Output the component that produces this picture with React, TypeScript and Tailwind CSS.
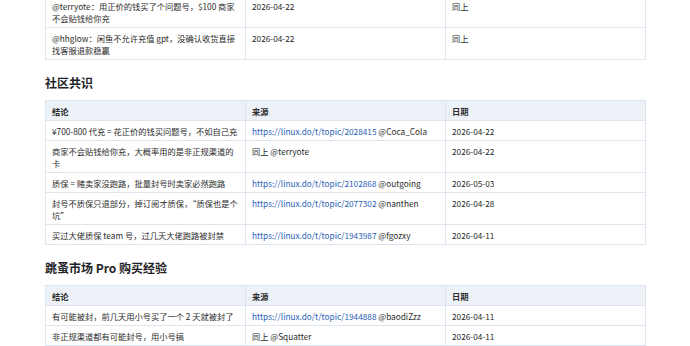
const FONT = "font-['Noto_Sans_CJK_SC','Noto_Sans',sans-serif]";

type Cell = { text: string; href?: string; after?: string };
type Row = [Cell, Cell, Cell];

const TOP_ROWS: Row[] = [
  [
    { text: "@terryote：用正价的钱买了个问题号，$100 商家不会贴钱给你充" },
    { text: "2026-04-22" },
    { text: "同上" },
  ],
  [
    { text: "@hhglow：闲鱼不允许充值 gpt，没确认收货直接找客服退款稳赢" },
    { text: "2026-04-22" },
    { text: "同上" },
  ],
];

const CONSENSUS: Row[] = [
  [
    { text: "¥700-800 代充 = 花正价的钱买问题号，不如自己充" },
    { text: "https://linux.do/t/topic/2028415", href: "#", after: " @Coca_Cola" },
    { text: "2026-04-22" },
  ],
  [
    { text: "商家不会贴钱给你充，大概率用的是非正规渠道的卡" },
    { text: "同上 @terryote" },
    { text: "2026-04-22" },
  ],
  [
    { text: "质保 = 赌卖家没跑路，批量封号时卖家必然跑路" },
    { text: "https://linux.do/t/topic/2102868", href: "#", after: " @outgoing" },
    { text: "2026-05-03" },
  ],
  [
    { text: "封号不质保只退部分，掉订阅才质保，\u201c质保也是个坑\u201d" },
    { text: "https://linux.do/t/topic/2077302", href: "#", after: " @nanthen" },
    { text: "2026-04-28" },
  ],
  [
    { text: "买过大佬质保 team 号，过几天大佬跑路被封禁" },
    { text: "https://linux.do/t/topic/1943987", href: "#", after: " @fgozxy" },
    { text: "2026-04-11" },
  ],
];

const FLEA: Row[] = [
  [
    { text: "有可能被封，前几天用小号买了一个 2 天就被封了" },
    { text: "https://linux.do/t/topic/1944888", href: "#", after: " @baodiZzz" },
    { text: "2026-04-11" },
  ],
  [
    { text: "非正规渠道都有可能封号，用小号搞" },
    { text: "同上 @Squatter" },
    { text: "2026-04-11" },
  ],
  [{ text: "" }, { text: "" }, { text: "" }],
];

function CellBody({ cell }: { cell: Cell }) {
  if (cell.href) {
    return (
      <>
        <a href={cell.href} className="text-[#2a62b8]">
          {cell.text}
        </a>
        {cell.after}
      </>
    );
  }
  return <>{cell.text || "\u00a0"}</>;
}

function Table({ rows, header }: { rows: Row[]; header?: string[] }) {
  return (
    <table className="w-[600px] table-fixed border-collapse text-[8.25px] leading-[12px] text-[#2b2b2b]">
      <colgroup>
        <col className="w-[200px]" />
        <col className="w-[200px]" />
        <col className="w-[200px]" />
      </colgroup>
      {header && (
        <thead>
          <tr className="bg-[#edf1f8]">
            {header.map((h) => (
              <th
                key={h}
                className="border border-[#dfe5ee] px-[6px] pt-[4px] pb-[3px] text-left font-bold"
              >
                {h}
              </th>
            ))}
          </tr>
        </thead>
      )}
      <tbody>
        {rows.map((row, i) => (
          <tr key={i}>
            {row.map((cell, j) => (
              <td
                key={j}
                className="border border-[#dfe5ee] pl-[6px] pr-[5px] pt-[4px] pb-[3px] align-top"
              >
                <CellBody cell={cell} />
              </td>
            ))}
          </tr>
        ))}
      </tbody>
    </table>
  );
}

function Heading({ children }: { children: React.ReactNode }) {
  return (
    <h2 className="mt-[15px] mb-[9px] text-[12px] leading-[16px] font-bold text-[#1f2328]">
      {children}
    </h2>
  );
}

export default function App() {
  const header = ["结论", "来源", "日期"];
  return (
    <div className={`${FONT} h-[346px] w-[690px] overflow-hidden bg-white px-[45px]`}>
      <div className="-mt-[5px]">
        <Table rows={TOP_ROWS} />
      </div>
      <Heading>社区共识</Heading>
      <Table rows={CONSENSUS} header={header} />
      <Heading>跳蚤市场 Pro 购买经验</Heading>
      <Table rows={FLEA} header={header} />
    </div>
  );
}
